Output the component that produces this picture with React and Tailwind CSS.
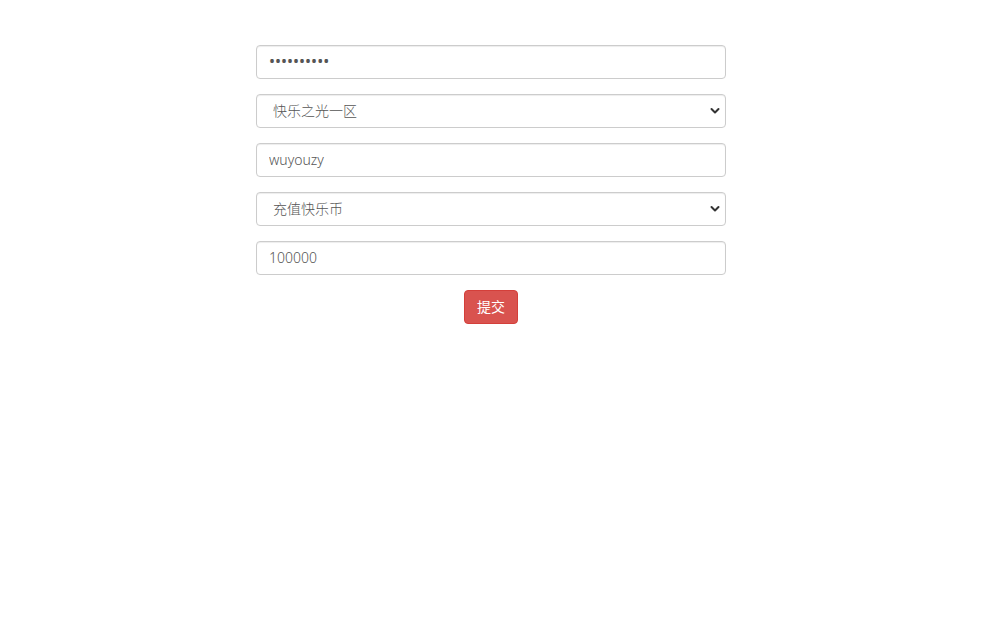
import { useState } from 'react';

const fieldCls =
  'block w-full h-[34px] px-3 pb-[2px] text-[14px] text-[#555] bg-white border border-[#ccc] rounded-[4px] shadow-[inset_0_1px_1px_rgba(0,0,0,0.075)] outline-none';

function Chevron() {
  return (
    <svg
      className="pointer-events-none absolute right-[6px] top-1/2 -translate-y-1/2"
      width="10"
      height="7"
      viewBox="0 0 10 7"
    >
      <path d="M1.5 1.5 L5 5 L8.5 1.5" fill="none" stroke="#333" strokeWidth="2" strokeLinecap="round" strokeLinejoin="round" />
    </svg>
  );
}

function SelectField({ value, options, onChange }) {
  return (
    <div className="relative">
      <select
        value={value}
        onChange={(e) => onChange(e.target.value)}
        className={fieldCls + ' appearance-none pl-4'}
      >
        {options.map((o) => (
          <option key={o} value={o}>{o}</option>
        ))}
      </select>
      <Chevron />
    </div>
  );
}

export default function App() {
  const [password, setPassword] = useState('1234567890');
  const [server, setServer] = useState('快乐之光一区');
  const [account, setAccount] = useState('wuyouzy');
  const [type, setType] = useState('充值快乐币');
  const [amount, setAmount] = useState('100000');

  return (
    <div
      className="min-h-screen bg-white pt-[45px]"
      style={{ fontFamily: '"Noto Sans", "Noto Sans CJK SC", sans-serif' }}
    >
      <form
        className="w-[470px] mx-auto flex flex-col gap-[15px] font-light"
        onSubmit={(e) => e.preventDefault()}
      >
        <input
          type="password"
          value={password}
          onChange={(e) => setPassword(e.target.value)}
          className={fieldCls + ' !text-[16px] !font-normal text-[#5e4f3e]'}
        />
        <SelectField value={server} options={['快乐之光一区', '快乐之光二区']} onChange={setServer} />
        <input
          type="text"
          value={account}
          onChange={(e) => setAccount(e.target.value)}
          className={fieldCls}
        />
        <SelectField value={type} options={['充值快乐币', '充值会员']} onChange={setType} />
        <input
          type="text"
          value={amount}
          onChange={(e) => setAmount(e.target.value)}
          className={fieldCls}
        />
        <div className="flex justify-center">
          <button
            type="submit"
            className="h-[34px] w-[54px] pb-[1px] text-[14px] font-normal text-white bg-[#d9534f] border border-[#d43f3a] rounded-[4px]"
          >
            提交
          </button>
        </div>
      </form>
    </div>
  );
}
